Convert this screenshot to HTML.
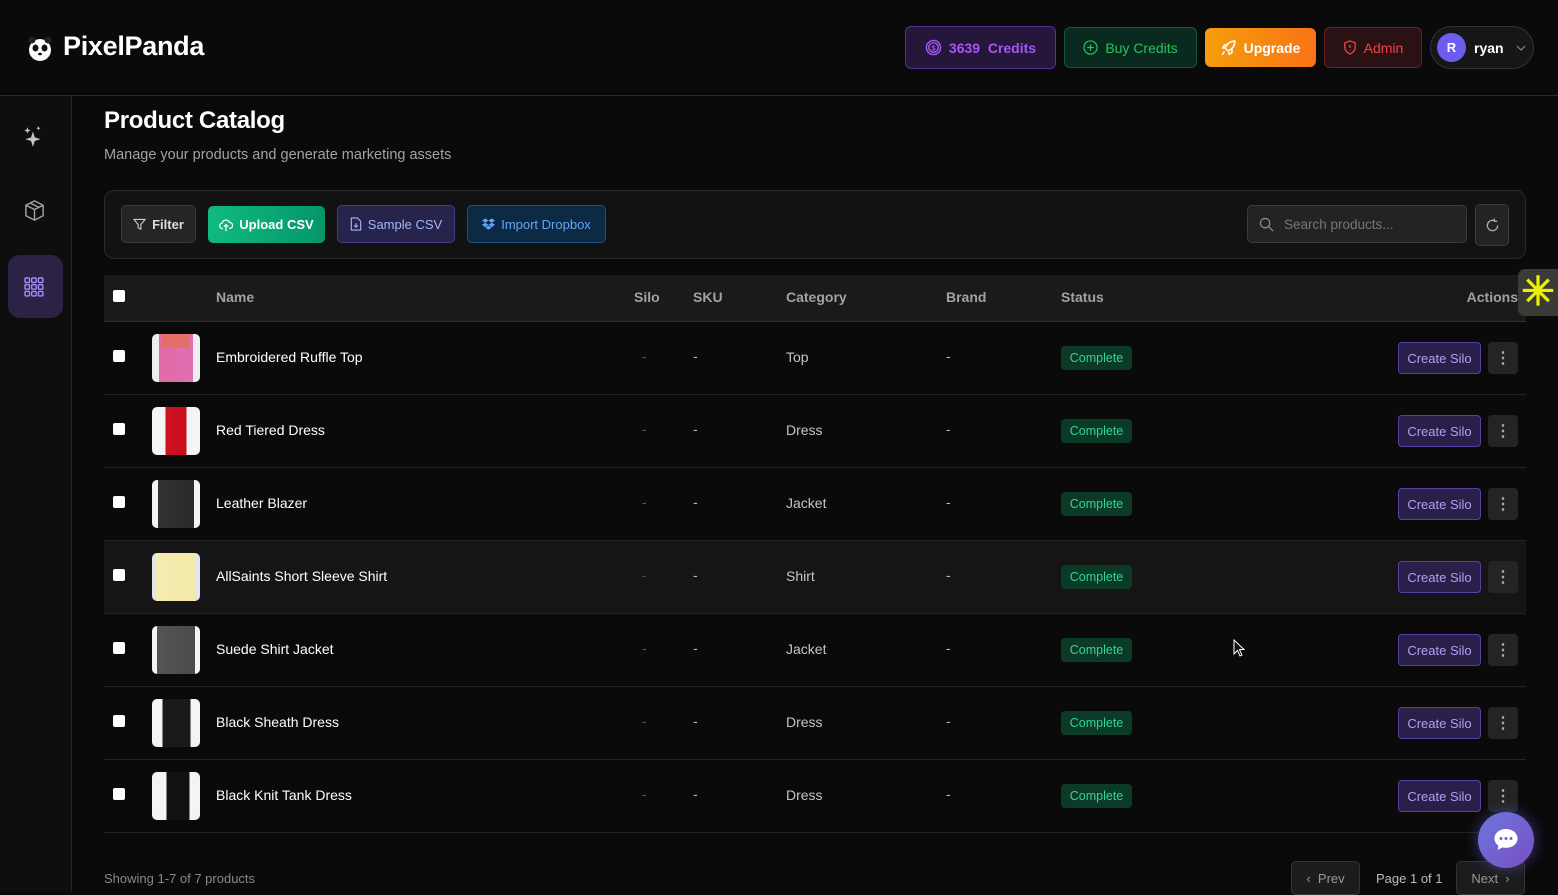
<!DOCTYPE html>
<html><head><meta charset="utf-8"><style>
*{box-sizing:border-box;margin:0;padding:0}
body{width:1558px;height:892px;overflow:hidden;background:#0a0a0a;font-family:"Liberation Sans",sans-serif;color:#fff;position:relative}
.abs{position:absolute}
.hdr{left:0;top:0;width:1558px;height:96px;border-bottom:1px solid #2a2a2a;background:#0a0a0a}
.side{left:0;top:96px;width:72px;height:796px;border-right:1px solid #262626;background:#0e0e0e}
.btn{position:absolute;display:flex;align-items:center;justify-content:center;gap:7px;font-size:14px;border-radius:6px;font-weight:bold}
.tb{position:absolute;display:flex;align-items:center;justify-content:center;gap:6px;font-size:13px;border-radius:5px;height:38px;top:205px}
.th{position:absolute;top:289px;font-size:14px;color:#a1a1aa;font-weight:bold}
.row{position:absolute;left:104px;width:1422px;height:73px;border-bottom:1px solid #222}
.cb{position:absolute;left:9px;top:28px;width:12px;height:12px;background:#fff;border-radius:2px}
.thumb{position:absolute;left:48px;top:12px;width:48px;height:48px;border-radius:5px;background:#f2f2f2;overflow:hidden}
.nm{position:absolute;left:112px;top:27px;font-size:14px;color:#fff}
.dash{position:absolute;top:26px;font-size:14px;color:#bbb}
.cat{position:absolute;left:682px;top:27px;font-size:14px;color:#c4c4cc}
.st{position:absolute;left:957px;top:24px;height:24px;width:71px;background:#0b3a27;color:#34d399;font-size:12.5px;border-radius:4px;display:flex;align-items:center;justify-content:center}
.cs{position:absolute;left:1294px;top:20px;width:83px;height:32px;background:#2a1f48;border:1px solid #5b3fa8;color:#b69cf5;font-size:13px;border-radius:4px;display:flex;align-items:center;justify-content:center}
.more{position:absolute;left:1384px;top:20px;width:30px;height:32px;background:#242424;border-radius:4px;display:flex;align-items:center;justify-content:center;color:#aaa;font-size:16px;font-weight:bold}
</style></head><body>
<div class="abs hdr"></div>
<svg class="abs" style="left:28px;top:36px" width="24" height="26" viewBox="0 0 24 26"><ellipse cx="12" cy="14" rx="11" ry="11" fill="#fff"/><circle cx="4" cy="4" r="3.5" fill="#222"/><circle cx="20" cy="4" r="3.5" fill="#222"/><ellipse cx="7.5" cy="12" rx="3" ry="3.5" fill="#111"/><ellipse cx="16.5" cy="12" rx="3" ry="3.5" fill="#111"/><ellipse cx="12" cy="18" rx="2" ry="1.3" fill="#111"/></svg>
<div class="abs" style="left:63px;top:31px;font-size:27px;font-weight:bold;letter-spacing:-0.3px">PixelPanda</div>

<div class="btn" style="left:905px;top:26px;width:151px;height:43px;background:#24173a;border:1px solid #5b2f8f;color:#a855f7"><svg width="17" height="17" viewBox="0 0 18 18" fill="none" stroke="#a855f7" stroke-width="1.5"><circle cx="9" cy="9" r="7.5"/><circle cx="9" cy="9" r="5"/><text x="9" y="12" font-size="8" text-anchor="middle" fill="#a855f7" stroke="none">$</text></svg>3639&nbsp; Credits</div>
<div class="btn" style="left:1064px;top:27px;width:133px;height:41px;background:#0b2a1f;border:1px solid #17543b;color:#22c55e;font-weight:normal"><svg width="15" height="15" viewBox="0 0 16 16" fill="none" stroke="#22c55e" stroke-width="1.3"><circle cx="8" cy="8" r="7"/><path d="M8 4.5v7M4.5 8h7"/></svg>Buy Credits</div>
<div class="btn" style="left:1205px;top:28px;width:111px;height:39px;background:linear-gradient(90deg,#f59e0b,#f97316);color:#fff"><svg width="16" height="16" viewBox="0 0 16 16" fill="none" stroke="#fff" stroke-width="1.5" stroke-linejoin="round"><path d="M6 10l-2-2c1.5-4 4.5-6.5 10-7-.5 5.5-3 8.5-7 10z"/><path d="M4 8H1.5l2-3H7M8 12v2.5l3-2V9"/><path d="M3.5 11.5L1 15"/></svg>Upgrade</div>
<div class="btn" style="left:1324px;top:27px;width:98px;height:41px;background:#2a1214;border:1px solid #6b1f22;color:#ef4444;font-weight:normal"><svg width="14" height="15" viewBox="0 0 14 16" fill="none" stroke="#ef4444" stroke-width="1.4"><path d="M7 1l5.5 2v5c0 3.5-2.5 5.5-5.5 7C4 13.5 1.5 11.5 1.5 8V3z"/><path d="M7 5v3.5M7 10.5v.5"/></svg>Admin</div>
<div class="btn" style="left:1430px;top:26px;width:104px;height:43px;background:#161616;border:1px solid #333;border-radius:22px;justify-content:flex-start;padding-left:6px;gap:8px"><span style="width:29px;height:29px;border-radius:50%;background:#6d5cf0;display:flex;align-items:center;justify-content:center;font-size:13px">R</span>ryan<svg style="margin-left:4px" width="10" height="6" viewBox="0 0 10 6" fill="none" stroke="#888" stroke-width="1.2"><path d="M1 1l4 4 4-4"/></svg></div>

<div class="abs side"></div>
<svg class="abs" style="left:22px;top:125px" width="24" height="24" viewBox="0 0 22 22" fill="#c4c4cc"><path d="M10 6 L11.7 11.3 L17 13 L11.7 14.7 L10 20 L8.3 14.7 L3 13 L8.3 11.3Z"/><path d="M5 2 L5.8 4.2 L8 5 L5.8 5.8 L5 8 L4.2 5.8 L2 5 L4.2 4.2Z"/><path d="M15 1 L15.6 2.4 L17 3 L15.6 3.6 L15 5 L14.4 3.6 L13 3 L14.4 2.4Z"/></svg>
<svg class="abs" style="left:23px;top:199px" width="23" height="23" viewBox="0 0 24 24" fill="none" stroke="#a1a1aa" stroke-width="1.5" stroke-linejoin="round"><path d="M12 2l9 4.5v11L12 22l-9-4.5v-11z"/><path d="M3 6.5L12 11l9-4.5M12 11v11M7.5 4.2l9 4.5"/></svg>
<div class="abs" style="left:8px;top:255px;width:55px;height:63px;background:#2b2245;border-radius:12px"></div>
<svg class="abs" style="left:24px;top:277px" width="20" height="20" viewBox="0 0 20 20" fill="none" stroke="#a78bfa" stroke-width="1.4"><rect x="1" y="1" width="4.5" height="4.5" rx="1"/><rect x="7.7" y="1" width="4.5" height="4.5" rx="1"/><rect x="14.4" y="1" width="4.5" height="4.5" rx="1"/><rect x="1" y="7.7" width="4.5" height="4.5" rx="1"/><rect x="7.7" y="7.7" width="4.5" height="4.5" rx="1"/><rect x="14.4" y="7.7" width="4.5" height="4.5" rx="1"/><rect x="1" y="14.4" width="4.5" height="4.5" rx="1"/><rect x="7.7" y="14.4" width="4.5" height="4.5" rx="1"/><rect x="14.4" y="14.4" width="4.5" height="4.5" rx="1"/></svg>

<div class="abs" style="left:104px;top:107px;font-size:24px;font-weight:bold;letter-spacing:-0.3px">Product Catalog</div>
<div class="abs" style="left:104px;top:147px;font-size:14.5px;color:#a1a1aa">Manage your products and generate marketing assets</div>

<div class="abs" style="left:104px;top:190px;width:1422px;height:69px;background:#121212;border:1px solid #2a2a2a;border-radius:10px"></div>
<div class="tb" style="left:121px;width:75px;background:#252525;border:1px solid #3a3a3a;color:#ddd;font-weight:bold"><svg width="13" height="13" viewBox="0 0 14 14" fill="none" stroke="#ccc" stroke-width="1.2"><path d="M1 1.5h12L8.5 7v5l-3-1.5V7z"/></svg>Filter</div>
<div class="tb" style="left:208px;width:117px;background:linear-gradient(90deg,#10b981,#059669);color:#fff;font-weight:bold;top:206px;height:37px"><svg width="14" height="14" viewBox="0 0 16 16" fill="none" stroke="#fff" stroke-width="1.4"><path d="M4.5 12H4a3 3 0 0 1-.5-6A4.5 4.5 0 0 1 12 5a3.3 3.3 0 0 1 0 7h-.5M8 7.5V15M5.5 10L8 7.5 10.5 10"/></svg>Upload CSV</div>
<div class="tb" style="left:337px;width:118px;background:#26244a;border:1px solid #433e8a;color:#a5b4fc"><svg width="12" height="14" viewBox="0 0 12 15" fill="none" stroke="#a5b4fc" stroke-width="1.2"><path d="M1 1h6.5L11 4.5V14H1zM6 6.5v4.5M4 9l2 2 2-2"/></svg>Sample CSV</div>
<div class="tb" style="left:467px;width:139px;background:#0d2a45;border:1px solid #1e4f7e;color:#60a5fa"><svg width="13" height="12" viewBox="0 0 14 12" fill="#60a5fa"><path d="M3.5 0L0 2.3l3.5 2.3L7 2.3zM10.5 0L7 2.3l3.5 2.3L14 2.3zM0 7l3.5 2.3L7 7 3.5 4.6zM10.5 4.6L7 7l3.5 2.3L14 7zM3.5 10l3.5 2 3.5-2L7 7.7z"/></svg>Import Dropbox</div>
<div class="tb" style="left:1247px;width:220px;background:#232323;border:1px solid #3a3a3a;justify-content:flex-start;padding-left:11px;gap:10px;color:#777;font-size:13.5px"><svg width="15" height="15" viewBox="0 0 16 16" fill="none" stroke="#888" stroke-width="1.4"><circle cx="6.5" cy="6.5" r="5"/><path d="M10.3 10.3L15 15"/></svg>Search products...</div>
<div class="tb" style="left:1475px;width:34px;height:42px;top:204px;background:#232323;border:1px solid #3a3a3a"><svg width="15" height="15" viewBox="0 0 16 16" fill="none" stroke="#aaa" stroke-width="1.4"><path d="M13.5 8A5.5 5.5 0 1 1 10 2.9M10 0.5v3h3"/></svg></div>

<div class="abs" style="left:104px;top:275px;width:1422px;height:47px;background:#1a1a1a;border-bottom:1px solid #2e2e2e"></div>
<div class="abs" style="left:113px;top:290px;width:12px;height:12px;background:#fff;border-radius:2px"></div>
<div class="th" style="left:216px">Name</div>
<div class="th" style="left:634px">Silo</div>
<div class="th" style="left:693px">SKU</div>
<div class="th" style="left:786px">Category</div>
<div class="th" style="left:946px">Brand</div>
<div class="th" style="left:1061px">Status</div>
<div class="th" style="right:40px">Actions</div>
<div class="abs" style="left:1518px;top:269px;width:40px;height:47px;background:#3a3a36;border-radius:7px 0 0 7px;color:#eaf000;font-size:40px;font-weight:bold;line-height:47px;text-align:center">✳</div>

<div class="row" style="top:322px"><div class="cb"></div><div class="thumb" style="background:linear-gradient(90deg,#eee 15%,#e36aa8 15%,#e070b0 85%,#eee 85%)"><div style="position:absolute;left:10px;top:0;width:28px;height:14px;background:#e8703a;opacity:.6"></div></div><div class="nm">Embroidered Ruffle Top</div><div class="dash" style="left:538px;color:#555">-</div><div class="dash" style="left:589px">-</div><div class="cat">Top</div><div class="dash" style="left:842px">-</div><div class="st">Complete</div><div class="cs">Create Silo</div><div class="more">⋮</div></div>
<div class="row" style="top:395px"><div class="cb"></div><div class="thumb" style="background:linear-gradient(90deg,#f4f4f4 28%,#d01020 28%,#c80e1c 72%,#f4f4f4 72%)"></div><div class="nm">Red Tiered Dress</div><div class="dash" style="left:538px;color:#555">-</div><div class="dash" style="left:589px">-</div><div class="cat">Dress</div><div class="dash" style="left:842px">-</div><div class="st">Complete</div><div class="cs">Create Silo</div><div class="more">⋮</div></div>
<div class="row" style="top:468px"><div class="cb"></div><div class="thumb" style="background:linear-gradient(90deg,#f4f4f4 12%,#333 12%,#2a2a2a 88%,#f4f4f4 88%)"></div><div class="nm">Leather Blazer</div><div class="dash" style="left:538px;color:#555">-</div><div class="dash" style="left:589px">-</div><div class="cat">Jacket</div><div class="dash" style="left:842px">-</div><div class="st">Complete</div><div class="cs">Create Silo</div><div class="more">⋮</div></div>
<div class="row" style="top:541px;background:#151515"><div class="cb"></div><div class="thumb" style="background:linear-gradient(90deg,#e4e4ea 8%,#f5ecb0 8%,#f3e9a8 92%,#e4e4ea 92%)"></div><div class="nm">AllSaints Short Sleeve Shirt</div><div class="dash" style="left:538px;color:#555">-</div><div class="dash" style="left:589px">-</div><div class="cat">Shirt</div><div class="dash" style="left:842px">-</div><div class="st">Complete</div><div class="cs">Create Silo</div><div class="more">⋮</div></div>
<div class="row" style="top:614px"><div class="cb"></div><div class="thumb" style="background:linear-gradient(90deg,#f4f4f4 10%,#555 10%,#4a4a4a 90%,#f4f4f4 90%)"></div><div class="nm">Suede Shirt Jacket</div><div class="dash" style="left:538px;color:#555">-</div><div class="dash" style="left:589px">-</div><div class="cat">Jacket</div><div class="dash" style="left:842px">-</div><div class="st">Complete</div><div class="cs">Create Silo</div><div class="more">⋮</div></div>
<div class="row" style="top:687px"><div class="cb"></div><div class="thumb" style="background:linear-gradient(90deg,#f4f4f4 22%,#1a1a1a 22%,#1a1a1a 80%,#f4f4f4 80%)"></div><div class="nm">Black Sheath Dress</div><div class="dash" style="left:538px;color:#555">-</div><div class="dash" style="left:589px">-</div><div class="cat">Dress</div><div class="dash" style="left:842px">-</div><div class="st">Complete</div><div class="cs">Create Silo</div><div class="more">⋮</div></div>
<div class="row" style="top:760px"><div class="cb"></div><div class="thumb" style="background:linear-gradient(90deg,#f4f4f4 30%,#111 30%,#111 78%,#f4f4f4 78%)"></div><div class="nm">Black Knit Tank Dress</div><div class="dash" style="left:538px;color:#555">-</div><div class="dash" style="left:589px">-</div><div class="cat">Dress</div><div class="dash" style="left:842px">-</div><div class="st">Complete</div><div class="cs">Create Silo</div><div class="more">⋮</div></div>

<div class="abs" style="left:104px;top:871px;font-size:13px;color:#888">Showing 1-7 of 7 products</div>
<div class="abs" style="left:1291px;top:861px;width:69px;height:34px;background:#1c1c1c;border:1px solid #333;border-radius:5px;color:#999;font-size:13px;display:flex;align-items:center;justify-content:center">‹&nbsp; Prev</div>
<div class="abs" style="left:1376px;top:871px;font-size:13px;color:#bbb">Page 1 of 1</div>
<div class="abs" style="left:1456px;top:861px;width:69px;height:34px;background:#1c1c1c;border:1px solid #333;border-radius:5px;color:#999;font-size:13px;display:flex;align-items:center;justify-content:center">Next&nbsp; ›</div>
<div class="abs" style="left:1478px;top:812px;width:56px;height:56px;border-radius:50%;background:linear-gradient(135deg,#6b76e0,#7a4fc0);box-shadow:0 0 14px rgba(110,100,240,.5)"><svg style="position:absolute;left:15px;top:16px" width="26" height="24" viewBox="0 0 26 24"><path d="M13 1C6.5 1 1.5 5 1.5 10.5c0 3 1.5 5.5 4 7.2L4.5 22l5.2-2.6c1 .3 2.2.4 3.3.4 6.5 0 11.5-4 11.5-9.3S19.5 1 13 1z" fill="#fff"/><circle cx="8" cy="10.5" r="1.5" fill="#7060d0"/><circle cx="13" cy="10.5" r="1.5" fill="#7060d0"/><circle cx="18" cy="10.5" r="1.5" fill="#7060d0"/></svg></div>
<svg class="abs" style="left:1233px;top:639px" width="12" height="18" viewBox="0 0 12 18"><path d="M1 1v14l3.5-3.5 2.5 5.5 2-1-2.5-5.5H11z" fill="#111" stroke="#fff" stroke-width="1"/></svg>
</body></html>
